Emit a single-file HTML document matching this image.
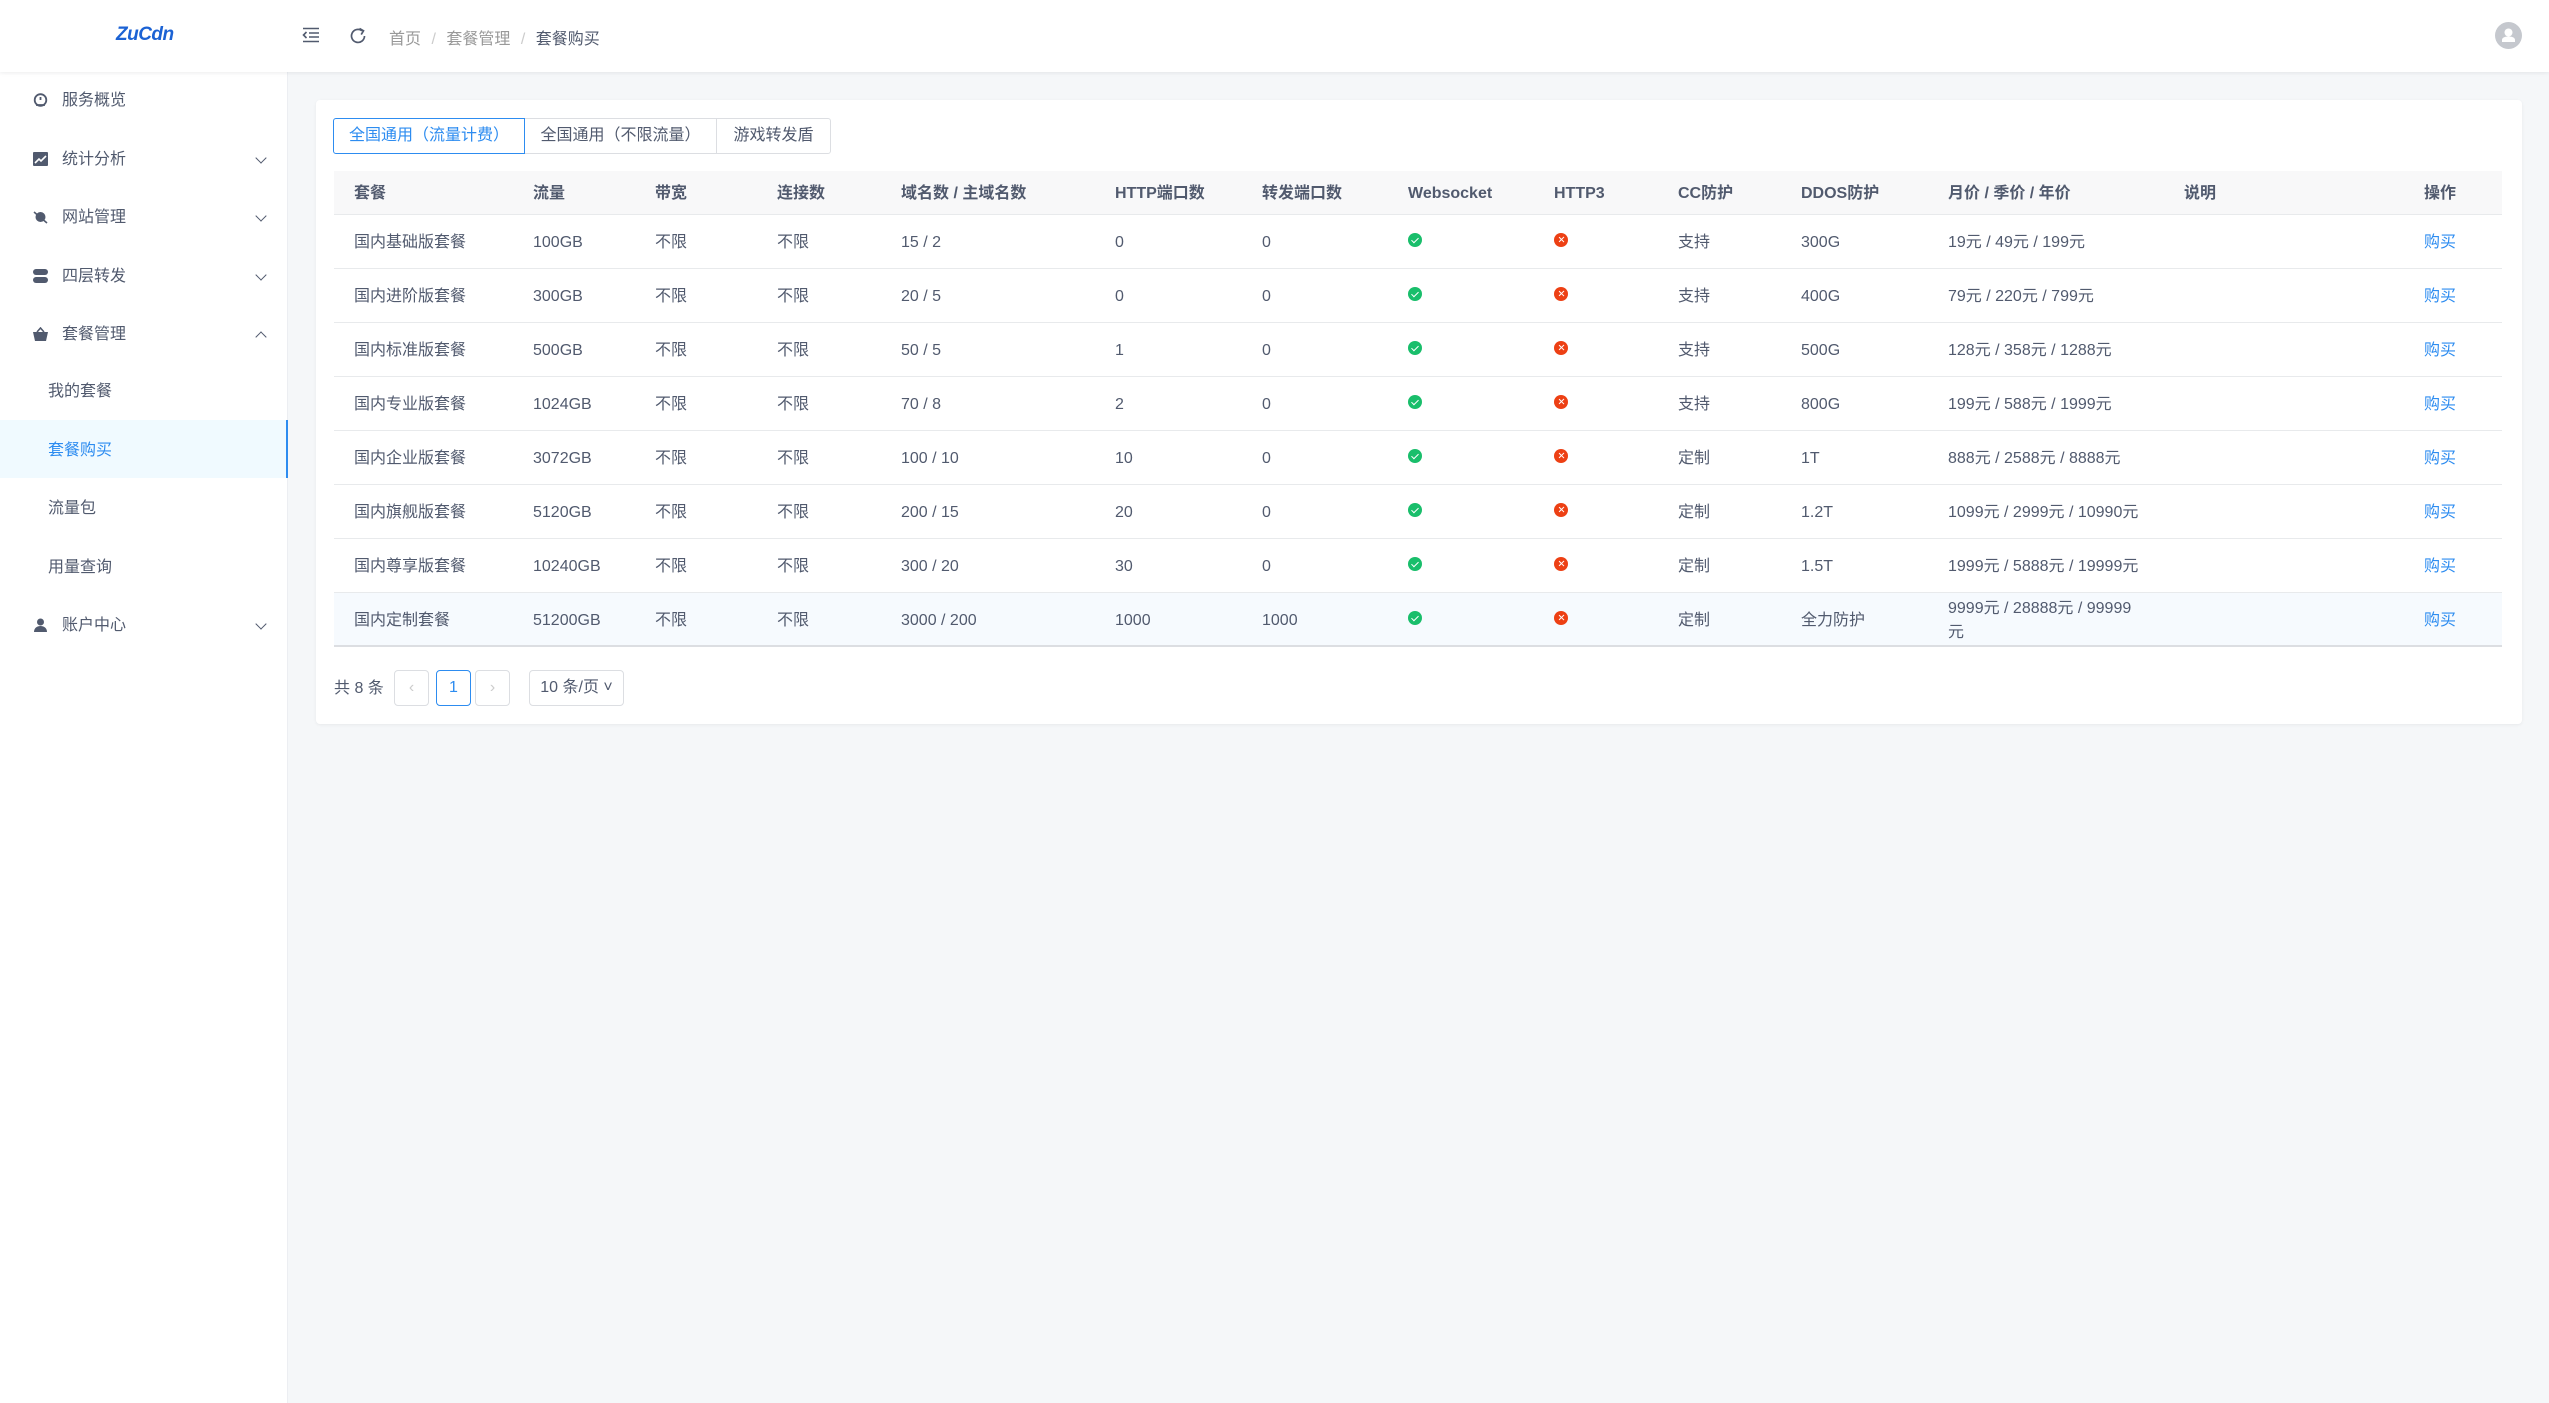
<!DOCTYPE html>
<html><head><meta charset="utf-8">
<style>
*{margin:0;padding:0;box-sizing:border-box}
body{width:2549px;height:1403px;background:#f5f7f9;font-family:"Liberation Sans","Noto Sans CJK SC",sans-serif;font-size:16px;color:#515a6e;position:relative;overflow:hidden}
.hdr{position:absolute;left:0;top:0;width:2549px;height:72px;background:#fff;box-shadow:0 1px 4px rgba(0,21,41,.08);z-index:2}
.side{position:absolute;left:0;top:72px;width:288px;height:1331px;background:#fff;border-right:1px solid #eceef2}
.mi{position:absolute;left:0;width:288px;height:58px;line-height:58px;color:#515a6e}
.mi .t{position:absolute;left:62px;top:2px}
.mi .ic{position:absolute;left:33px;top:23px;width:15px;height:14px}
.mi .ar{position:absolute;left:257px;top:25px;width:8px;height:8px;border-right:1.6px solid #515a6e;border-bottom:1.6px solid #515a6e;transform:rotate(45deg)}
.mi .ar.up{transform:rotate(-135deg);top:29px}
.sub .t{left:48px}
.act{background:#f0faff;color:#2d8cf0;border-right:2px solid #2d8cf0}
.card{position:absolute;left:316px;top:100px;width:2206px;height:624px;background:#fff;border-radius:4px;box-shadow:0 1px 3px rgba(0,0,0,.06)}
.tabs{position:absolute;left:18px;top:18px;height:36px;display:flex}
.tab{height:36px;line-height:34px;border:1px solid #dcdee2;color:#515a6e;font-size:16px;margin-left:-1px;text-align:center}
.tab.on{border-color:#2d8cf0;color:#2d8cf0;position:relative;z-index:1;border-radius:3px 0 0 3px}
.tab:last-child{border-radius:0 3px 3px 0}
table{position:absolute;left:18px;top:71px;width:2168px;border-collapse:collapse;table-layout:fixed}
th{height:43px;background:#f8f8f9;text-align:left;font-weight:bold;color:#515a6e;border-bottom:1px solid #e8eaec;padding:0}
td{height:54px;border-bottom:1px solid #e8eaec;padding:0;color:#515a6e;vertical-align:middle}
th div,td div{padding-left:20px;line-height:20px;position:relative;top:2px}
tr.hl td{background:#f6fafe;border-bottom:2px solid #dcdee2}
.ok,.no{display:inline-block;width:14px;height:14px;border-radius:50%;vertical-align:middle;position:relative;top:-3px}
.ok{background:#19be6b}.no{background:#ed4014}
.ok:after{content:"";position:absolute;left:5px;top:3px;width:3px;height:6px;border-right:1.2px solid #fff;border-bottom:1.2px solid #fff;transform:rotate(45deg)}
.no:before,.no:after{content:"";position:absolute;left:6.5px;top:3.5px;width:1.2px;height:7px;background:#fff;transform:rotate(45deg)}
.no:after{transform:rotate(-45deg)}
.buy{color:#2d8cf0}
.pg{position:absolute;top:570px;height:36px;border:1px solid #dcdee2;border-radius:4px;text-align:center;line-height:34px;color:#515a6e}
</style></head><body>
<div class="hdr">
  <div style="position:absolute;left:116px;top:24px;font-style:italic;font-weight:bold;color:#1b62d4;font-size:19px;letter-spacing:-0.5px">ZuCdn</div>
  <svg style="position:absolute;left:302px;top:27px" width="18" height="16" viewBox="0 0 18 16"><path d="M1 1.5h16M7 6h10M7 10h10M1 14.5h16M4.5 5L1.5 8l3 3" stroke="#515a6e" stroke-width="1.6" fill="none"/></svg>
  <svg style="position:absolute;left:349px;top:27px" width="18" height="18" viewBox="0 0 18 18"><path d="M15.5 9A6.5 6.5 0 1 1 13 3.8" stroke="#515a6e" stroke-width="1.7" fill="none"/><path d="M10.5 1.5l4 2.3-2.3 3.8" stroke="#515a6e" stroke-width="1.7" fill="none"/></svg>
  <div style="position:absolute;left:389px;top:25px;color:#999">首页 <span style="color:#ccc;margin:0 6px">/</span> 套餐管理 <span style="color:#ccc;margin:0 6px">/</span> <span style="color:#515a6e">套餐购买</span></div>
  <svg style="position:absolute;left:2495px;top:22px" width="27" height="27" viewBox="0 0 27 27"><circle cx="13.5" cy="13.5" r="13.5" fill="#c5c8ce"/><circle cx="13.5" cy="10.5" r="4" fill="#fff"/><path d="M7 20h13v-2c0-2-2-3.5-6.5-3.5S7 16 7 18z" fill="#fff"/></svg>
</div>
<div class="side">
  <div class="mi" style="top:-2px"><svg class="ic" viewBox="0 0 15 14"><circle cx="7.5" cy="7" r="5.8" stroke="#515a6e" stroke-width="1.8" fill="none"/><path d="M7.5 7V4M3 12h9" stroke="#515a6e" stroke-width="1.8"/></svg><span class="t">服务概览</span></div>
  <div class="mi" style="top:57px"><svg class="ic" viewBox="0 0 15 14"><rect x="0" y="0" width="15" height="14" rx="1" fill="#515a6e"/><path d="M2 11l4-4 2 2 5-5" stroke="#fff" stroke-width="1.6" fill="none"/></svg><span class="t">统计分析</span><span class="ar"></span></div>
  <div class="mi" style="top:115px"><svg class="ic" viewBox="0 0 15 14"><circle cx="7.5" cy="7" r="5" fill="#515a6e"/><path d="M1 2l13 11" stroke="#515a6e" stroke-width="1.6"/></svg><span class="t">网站管理</span><span class="ar"></span></div>
  <div class="mi" style="top:174px"><svg class="ic" viewBox="0 0 15 14"><rect x="0" y="0" width="15" height="6" rx="3" fill="#515a6e"/><rect x="0" y="8" width="15" height="6" rx="3" fill="#515a6e"/></svg><span class="t">四层转发</span><span class="ar"></span></div>
  <div class="mi" style="top:232px"><svg class="ic" viewBox="0 0 15 14"><path d="M0 5h15l-2 9H2z" fill="#515a6e"/><path d="M4 5l3.5-4 3.5 4" stroke="#515a6e" stroke-width="1.6" fill="none"/></svg><span class="t">套餐管理</span><span class="ar up"></span></div>
  <div class="mi sub" style="top:289px"><span class="t">我的套餐</span></div>
  <div class="mi sub act" style="top:348px"><span class="t">套餐购买</span></div>
  <div class="mi sub" style="top:406px"><span class="t">流量包</span></div>
  <div class="mi sub" style="top:465px"><span class="t">用量查询</span></div>
  <div class="mi" style="top:523px"><svg class="ic" viewBox="0 0 15 14"><circle cx="7.5" cy="4" r="3.5" fill="#515a6e"/><path d="M1 14c0-4 3-6 6.5-6S14 10 14 14z" fill="#515a6e"/></svg><span class="t">账户中心</span><span class="ar"></span></div>
</div>
<div class="card">
  <div class="tabs"><div class="tab on" style="width:192px">全国通用（流量计费）</div><div class="tab" style="width:193px">全国通用（不限流量）</div><div class="tab" style="width:115px">游戏转发盾</div></div>
  <table>
    <colgroup><col style="width:179px"><col style="width:122px"><col style="width:122px"><col style="width:124px"><col style="width:214px"><col style="width:147px"><col style="width:146px"><col style="width:146px"><col style="width:124px"><col style="width:123px"><col style="width:147px"><col style="width:236px"><col style="width:240px"><col style="width:98px"></colgroup>
    <tr><th><div>套餐</div></th><th><div>流量</div></th><th><div>带宽</div></th><th><div>连接数</div></th><th><div>域名数 / 主域名数</div></th><th><div>HTTP端口数</div></th><th><div>转发端口数</div></th><th><div>Websocket</div></th><th><div>HTTP3</div></th><th><div>CC防护</div></th><th><div>DDOS防护</div></th><th><div>月价 / 季价 / 年价</div></th><th><div>说明</div></th><th><div>操作</div></th></tr>
    <tr><td><div>国内基础版套餐</div></td><td><div>100GB</div></td><td><div>不限</div></td><td><div>不限</div></td><td><div>15 / 2</div></td><td><div>0</div></td><td><div>0</div></td><td><div><i class="ok"></i></div></td><td><div><i class="no"></i></div></td><td><div>支持</div></td><td><div>300G</div></td><td><div>19元 / 49元 / 199元</div></td><td></td><td><div class="buy">购买</div></td></tr>
    <tr><td><div>国内进阶版套餐</div></td><td><div>300GB</div></td><td><div>不限</div></td><td><div>不限</div></td><td><div>20 / 5</div></td><td><div>0</div></td><td><div>0</div></td><td><div><i class="ok"></i></div></td><td><div><i class="no"></i></div></td><td><div>支持</div></td><td><div>400G</div></td><td><div>79元 / 220元 / 799元</div></td><td></td><td><div class="buy">购买</div></td></tr>
    <tr><td><div>国内标准版套餐</div></td><td><div>500GB</div></td><td><div>不限</div></td><td><div>不限</div></td><td><div>50 / 5</div></td><td><div>1</div></td><td><div>0</div></td><td><div><i class="ok"></i></div></td><td><div><i class="no"></i></div></td><td><div>支持</div></td><td><div>500G</div></td><td><div>128元 / 358元 / 1288元</div></td><td></td><td><div class="buy">购买</div></td></tr>
    <tr><td><div>国内专业版套餐</div></td><td><div>1024GB</div></td><td><div>不限</div></td><td><div>不限</div></td><td><div>70 / 8</div></td><td><div>2</div></td><td><div>0</div></td><td><div><i class="ok"></i></div></td><td><div><i class="no"></i></div></td><td><div>支持</div></td><td><div>800G</div></td><td><div>199元 / 588元 / 1999元</div></td><td></td><td><div class="buy">购买</div></td></tr>
    <tr><td><div>国内企业版套餐</div></td><td><div>3072GB</div></td><td><div>不限</div></td><td><div>不限</div></td><td><div>100 / 10</div></td><td><div>10</div></td><td><div>0</div></td><td><div><i class="ok"></i></div></td><td><div><i class="no"></i></div></td><td><div>定制</div></td><td><div>1T</div></td><td><div>888元 / 2588元 / 8888元</div></td><td></td><td><div class="buy">购买</div></td></tr>
    <tr><td><div>国内旗舰版套餐</div></td><td><div>5120GB</div></td><td><div>不限</div></td><td><div>不限</div></td><td><div>200 / 15</div></td><td><div>20</div></td><td><div>0</div></td><td><div><i class="ok"></i></div></td><td><div><i class="no"></i></div></td><td><div>定制</div></td><td><div>1.2T</div></td><td><div>1099元 / 2999元 / 10990元</div></td><td></td><td><div class="buy">购买</div></td></tr>
    <tr><td><div>国内尊享版套餐</div></td><td><div>10240GB</div></td><td><div>不限</div></td><td><div>不限</div></td><td><div>300 / 20</div></td><td><div>30</div></td><td><div>0</div></td><td><div><i class="ok"></i></div></td><td><div><i class="no"></i></div></td><td><div>定制</div></td><td><div>1.5T</div></td><td><div>1999元 / 5888元 / 19999元</div></td><td></td><td><div class="buy">购买</div></td></tr>
    <tr class="hl"><td><div>国内定制套餐</div></td><td><div>51200GB</div></td><td><div>不限</div></td><td><div>不限</div></td><td><div>3000 / 200</div></td><td><div>1000</div></td><td><div>1000</div></td><td><div><i class="ok"></i></div></td><td><div><i class="no"></i></div></td><td><div>定制</div></td><td><div>全力防护</div></td><td><div style="line-height:24px">9999元 / 28888元 / 99999<br>元</div></td><td></td><td><div class="buy">购买</div></td></tr>
  </table>
  <div style="position:absolute;left:18px;top:579px;color:#515a6e;line-height:20px">共 8 条</div>
  <div class="pg" style="left:78px;width:35px;color:#ccc">‹</div>
  <div class="pg" style="left:120px;width:35px;border-color:#2d8cf0;color:#2d8cf0">1</div>
  <div class="pg" style="left:159px;width:35px;color:#ccc">›</div>
  <div class="pg" style="left:213px;width:95px">10 条/页 ˅</div>
</div>
</body></html>
